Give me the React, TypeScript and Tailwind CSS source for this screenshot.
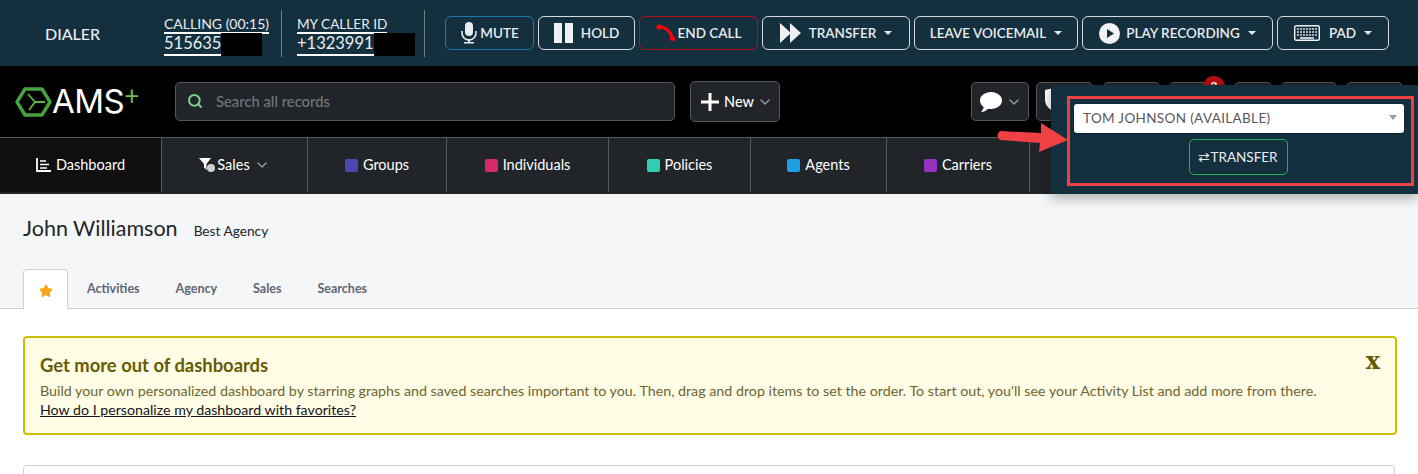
import { ChevronDown, Search, Star } from "lucide-react";

const font = "font-['Lato','Noto_Sans',sans-serif]";

function Caret() {
  return <span className="ml-2 inline-block border-x-[4px] border-t-[4px] border-x-transparent border-t-[#e5e7eb]" />;
}

function DialButton({ width, className, children }: { width: string; className?: string; children: React.ReactNode }) {
  return (
    <div className={`h-[34px] ${width} flex items-center justify-center rounded-[6px] border text-[13.5px] font-semibold text-[#e9ecef] ${className ?? "border-[#d5d9dc]"}`}>
      {children}
    </div>
  );
}

function NavItem({ width, color, label }: { width: string; color: string; label: string }) {
  return (
    <div className={`${width} h-[54px] flex items-center justify-center gap-[5px] border-r border-[#555a5f] text-[14.5px] text-white`}>
      <span className={`h-[13px] w-[13px] rounded-[2px] ${color}`} />
      {label}
    </div>
  );
}

function Logo() {
  return (
    <svg width="37" height="32" viewBox="0 0 37 32" fill="none">
      <path d="M10 3h17l8 13-8 13H10L2 16z" stroke="#47a33f" strokeWidth="3.4" strokeLinejoin="round" />
      <path d="M13 8l7 8-6 8M20 16h10" stroke="#5fb345" strokeWidth="1.8" />
    </svg>
  );
}

export default function App() {
  return (
    <div className={`relative h-[474px] w-[1418px] overflow-hidden bg-white ${font}`}>
      {/* DIALER BAR */}
      <div className="flex h-[66px] items-center bg-[#14303f] text-[#e9ecef]">
        <div className="w-[164px] pl-[45px] pt-[2px] text-[16px] font-medium">DIALER</div>
        <div className="w-[118px] border-r border-[#6f8188] h-[47px] leading-none">
          <div className="mt-[7px] w-fit border-b-2 border-white text-[14px] pb-[1px] whitespace-nowrap">CALLING (00:15)</div>
          <div className="flex">
            <span className="-mt-px border-b-2 border-white text-[16.5px] leading-[20px]">515635</span>
            <span className="h-[23px] w-[41px] -mt-[1px] bg-black" />
          </div>
        </div>
        <div className="w-[143px] pl-[15px] border-r border-[#6f8188] h-[47px] leading-none">
          <div className="mt-[8px] w-fit border-b-2 border-white text-[13.6px] pb-[1px]">MY CALLER ID</div>
          <div className="flex">
            <span className="-mt-px border-b-2 border-white text-[16.5px] leading-[20px]">+1323991</span>
            <span className="h-[23px] w-[41px] -mt-[1px] bg-black" />
          </div>
        </div>
        <div className="ml-[20px] flex gap-[4px]">
          <DialButton width="w-[89px]" className="border-[#1f78ab]">
            <svg width="18" height="22" viewBox="0 0 18 22" className="mr-[2px]" fill="#e9ecef">
              <rect x="5" y="0" width="8" height="14" rx="4" />
              <path d="M2 9v2a7 7 0 0 0 14 0V9" fill="none" stroke="#e9ecef" strokeWidth="1.6" />
              <path d="M8 17h2v3h4v1.5H4V20h4z" />
            </svg>
            MUTE
          </DialButton>
          <DialButton width="w-[97px]">
            <span className="mr-[8px] flex gap-[3px]">
              <span className="h-[20px] w-[8px] bg-[#eef0f1]" />
              <span className="h-[20px] w-[8px] bg-[#eef0f1]" />
            </span>
            HOLD
          </DialButton>
          <DialButton width="w-[119px]" className="border-[#b3121d]">
            <svg width="20" height="20" viewBox="0 0 20 20" className="mr-[2px]">
              <path d="M2 4c6-1 12 3 15 12" fill="none" stroke="#ff0000" strokeWidth="3" />
              <circle cx="3" cy="4" r="2.6" fill="#ff0000" />
              <circle cx="16.5" cy="15.5" r="2.6" fill="#ff0000" />
            </svg>
            END CALL
          </DialButton>
          <DialButton width="w-[148px]">
            <svg width="22" height="20" viewBox="0 0 22 20" className="mr-[7px]" fill="#eef0f1">
              <path d="M0 0l11 10L0 20zM10 0l11 10-11 10z" />
            </svg>
            TRANSFER
            <Caret />
          </DialButton>
          <DialButton width="w-[164px]">
            LEAVE VOICEMAIL
            <Caret />
          </DialButton>
          <DialButton width="w-[191px]">
            <svg width="21" height="21" viewBox="0 0 21 21" className="mr-[6px]">
              <circle cx="10.5" cy="10.5" r="10.5" fill="#f1f3f4" />
              <path d="M8 6l7 4.5L8 15z" fill="#14303f" />
            </svg>
            PLAY RECORDING
            <Caret />
          </DialButton>
          <DialButton width="w-[112px]">
            <svg width="26" height="16" viewBox="0 0 26 16" className="mr-[9px]" fill="none">
              <rect x="0.7" y="0.7" width="24.6" height="14.6" rx="1.5" fill="#14303f" stroke="#f1f3f4" strokeWidth="1.4" />
              <path d="M3 4h20M3 7h20M3 10h20" stroke="#d5d9dc" strokeWidth="1.5" strokeDasharray="2 1" />
              <path d="M6 13h14" stroke="#f1f3f4" strokeWidth="1.6" />
            </svg>
            PAD
            <Caret />
          </DialButton>
        </div>
      </div>

      {/* HEADER */}
      <div className="flex h-[71px] bg-black pl-[15px] pt-[16px]">
        <div className="flex h-[39px] w-[160px] items-center">
          <Logo />
          <span className="text-[33px] leading-none tracking-[-0.5px] text-white font-['Inter',sans-serif]">AMS</span>
          <span className="-mt-[14px] text-[26px] leading-none text-[#6cbf4a]">+</span>
        </div>
        <div className="flex h-[39px] w-[500px] items-center gap-[13px] rounded-[5px] border border-[#54585c] bg-[#212529] pb-[1px] pl-[11px] text-[14.8px] font-medium text-[#72767a]">
          <Search size={16} strokeWidth={3} className="text-[#7bcf8f]" />
          Search all records
        </div>
        <div className="ml-[15px] flex h-[41px] w-[90px] -mt-px items-center rounded-[5px] border border-[#54585c] bg-[#212529] pl-[9px] text-[14.5px] font-medium text-white">
          <svg width="20" height="20" viewBox="0 0 20 20" className="mr-[4px]">
            <path d="M8.5 1h3v7.5H19v3h-7.5V19h-3v-7.5H1v-3h7.5z" fill="#fff" />
          </svg>
          New
          <ChevronDown size={16} className="ml-[3px] text-[#9a9ea1]" />
        </div>
        <div className="ml-[191px] flex">
          <div className="flex h-[39px] w-[58px] items-center justify-center rounded-[5px] border border-[#54585c] bg-[#212529]">
            <svg width="24" height="22" viewBox="0 0 24 22" fill="#fff">
              <path d="M12 1c6 0 11 3.6 11 8.5S18 18 12 18c-1 0-2-.1-3-.3C7.500 19.500 5 21 2 21c1.500-1.500 2.500-3.200 2.700-5C2.400 14.500 1 12.200 1 9.500 1 4.600 6 1 12 1z" />
            </svg>
            <ChevronDown size={16} className="ml-[3px] text-[#9a9ea1]" />
          </div>
          <div className="ml-[7px] h-[39px] w-[57px] rounded-[5px] border border-[#54585c] bg-[#212529] pl-[8px] pt-[5px]">
            <svg width="18" height="24" viewBox="0 0 18 24" fill="#fff">
              <path d="M0 2l9-2 9 2v10c0 5-4 9-9 12-5-3-9-7-9-12z" />
            </svg>
          </div>
          <div className="ml-[10px] h-[39px] w-[57px] rounded-[5px] border border-[#54585c] bg-[#212529]" />
          <div className="relative ml-[9px] h-[39px] w-[56px] rounded-[5px] border border-[#54585c] bg-[#212529]">
            <span className="absolute -top-[7px] left-[33px] flex h-[22px] w-[22px] items-start justify-center rounded-full bg-[#b30f0f] text-[12px] font-bold leading-[20px] text-white">3</span>
          </div>
          <div className="ml-[9px] h-[39px] w-[38px] rounded-[5px] border border-[#54585c] bg-[#212529]" />
          <div className="ml-[9px] h-[39px] w-[56px] rounded-[5px] border border-[#54585c] bg-[#212529]" />
          <div className="ml-[9px] h-[39px] w-[57px] rounded-[5px] border border-[#54585c] bg-[#212529]" />
        </div>
      </div>

      {/* NAV */}
      <div className="h-[57px] border-t border-[#555a5f] bg-[#212529]">
        <div className="flex">
          <div className="flex h-[54px] w-[162px] items-center justify-center gap-[5px] border-r border-[#555a5f] bg-[#0f0f0f] text-[14.5px] text-white">
            <svg width="15" height="14" viewBox="0 0 15 14" fill="none" stroke="#fff">
              <path d="M1 0v13h14" strokeWidth="1.8" />
              <path d="M4 3h6M4 6.500h9M4 10h7" strokeWidth="1.5" />
            </svg>
            Dashboard
          </div>
          <div className="flex h-[54px] w-[146px] items-center justify-center gap-[2px] border-r border-[#555a5f] text-[14.5px] text-white">
            <svg width="16" height="14" viewBox="0 0 16 14" fill="#fff">
              <path d="M0 0h12L7.500 6v6L5 9.500V6z" />
              <circle cx="12" cy="10" r="4" fill="#cfd2d4" />
            </svg>
            Sales
            <ChevronDown size={16} className="ml-[2px] text-[#9a9ea1]" />
          </div>
          <NavItem width="w-[139px]" color="bg-[#4c46b1]" label="Groups" />
          <NavItem width="w-[162px]" color="bg-[#d42a6b]" label="Individuals" />
          <NavItem width="w-[142px]" color="bg-[#33cdb1]" label="Policies" />
          <NavItem width="w-[136px]" color="bg-[#1fa0e3]" label="Agents" />
          <NavItem width="w-[143px]" color="bg-[#9632c3]" label="Carriers" />
        </div>
      </div>

      {/* PAGE HEAD */}
      <div className="h-[115px] border-b border-[#ced2d8] bg-[#f5f6f8] px-[23px]">
        <div className="flex items-baseline pt-[18px]">
          <span className="text-[21.500px] text-[#212529]">John Williamson</span>
          <span className="ml-[16px] text-[13.7px] text-[#212529]">Best Agency</span>
        </div>
        <div className="mt-[25px] flex h-[40px] items-center">
          <div className="flex h-[40px] w-[45px] items-center justify-center rounded-t-[4px] border border-b-0 border-[#ced2d8] bg-white pt-[2px]">
            <Star size={14} fill="#f7a616" stroke="#f7a616" />
          </div>
          <div className="ml-[19px] flex gap-[36px] text-[12.5px] font-bold text-[#5f6673]">
            <span>Activities</span>
            <span>Agency</span>
            <span>Sales</span>
            <span>Searches</span>
          </div>
        </div>
      </div>

      {/* NOTICE */}
      <div className="px-[21px] pt-[27px]">
        <div className="relative ml-[2px] h-[99px] rounded-[4px] border-2 border-[#cfbe00] bg-[#fffde6] px-[15px] pt-[14px]">
          <div className="mb-[2px] text-[18.400px] font-bold leading-[27px] text-[#665b00]">Get more out of dashboards</div>
          <div className="text-[14.27px] leading-[19px] text-[#6e6530]">
            Build your own personalized dashboard by starring graphs and saved searches important to you. Then, drag and drop items to set the order. To start out, you'll see your Activity List and add more from there.
          </div>
          <div className="text-[14.2px] leading-[19px] text-[#15141a] underline">How do I personalize my dashboard with favorites?</div>
          <span className="absolute right-[15px] top-[11px] font-['DejaVu_Serif',serif] text-[24px] font-black leading-none text-[#665b00]">x</span>
        </div>
      </div>
      <div className="mx-[23px] mt-[30px] h-[20px] rounded-t-[4px] border border-[#ced2d8] bg-white" />

      {/* TRANSFER POPOVER */}
      <div className="absolute left-[1051px] top-[85px] flex h-[109px] w-[367px] flex-col items-center bg-[#14303f] pt-[19px] shadow-[0_4px_12px_rgba(0,0,0,0.3)]">
        <div className="relative ml-[9px] flex h-[29px] w-[330px] items-center rounded-[3px] bg-white pl-[9px] text-[13.5px] tracking-[0.35px] text-[#5b5560] shadow-[0_1px_2px_rgba(0,0,0,0.4)]">
          TOM JOHNSON (AVAILABLE)
          <span className="absolute right-[7px] top-[11px] border-x-[4px] border-t-[5px] border-x-transparent border-t-[#9a9ea1]" />
        </div>
        <div className="ml-[7px] mt-[6px] flex h-[36px] w-[99px] items-center justify-center rounded-[5px] border border-[#1fb45a] text-[13.5px] text-[#e9ecef]">
          ⇄TRANSFER
        </div>
      </div>

      {/* ANNOTATION */}
      <div className="absolute left-[1067px] top-[96px] h-[90px] w-[347px] border-[3px] border-[#ef4044]" />
      <svg className="absolute left-[990px] top-[120px]" width="80" height="36" viewBox="0 0 80 36">
        <path d="M10 11L51 13 51 3 78 20 49 32 50 23 10 20Q5 15 10 11z" fill="#ef4044" />
      </svg>
    </div>
  );
}
